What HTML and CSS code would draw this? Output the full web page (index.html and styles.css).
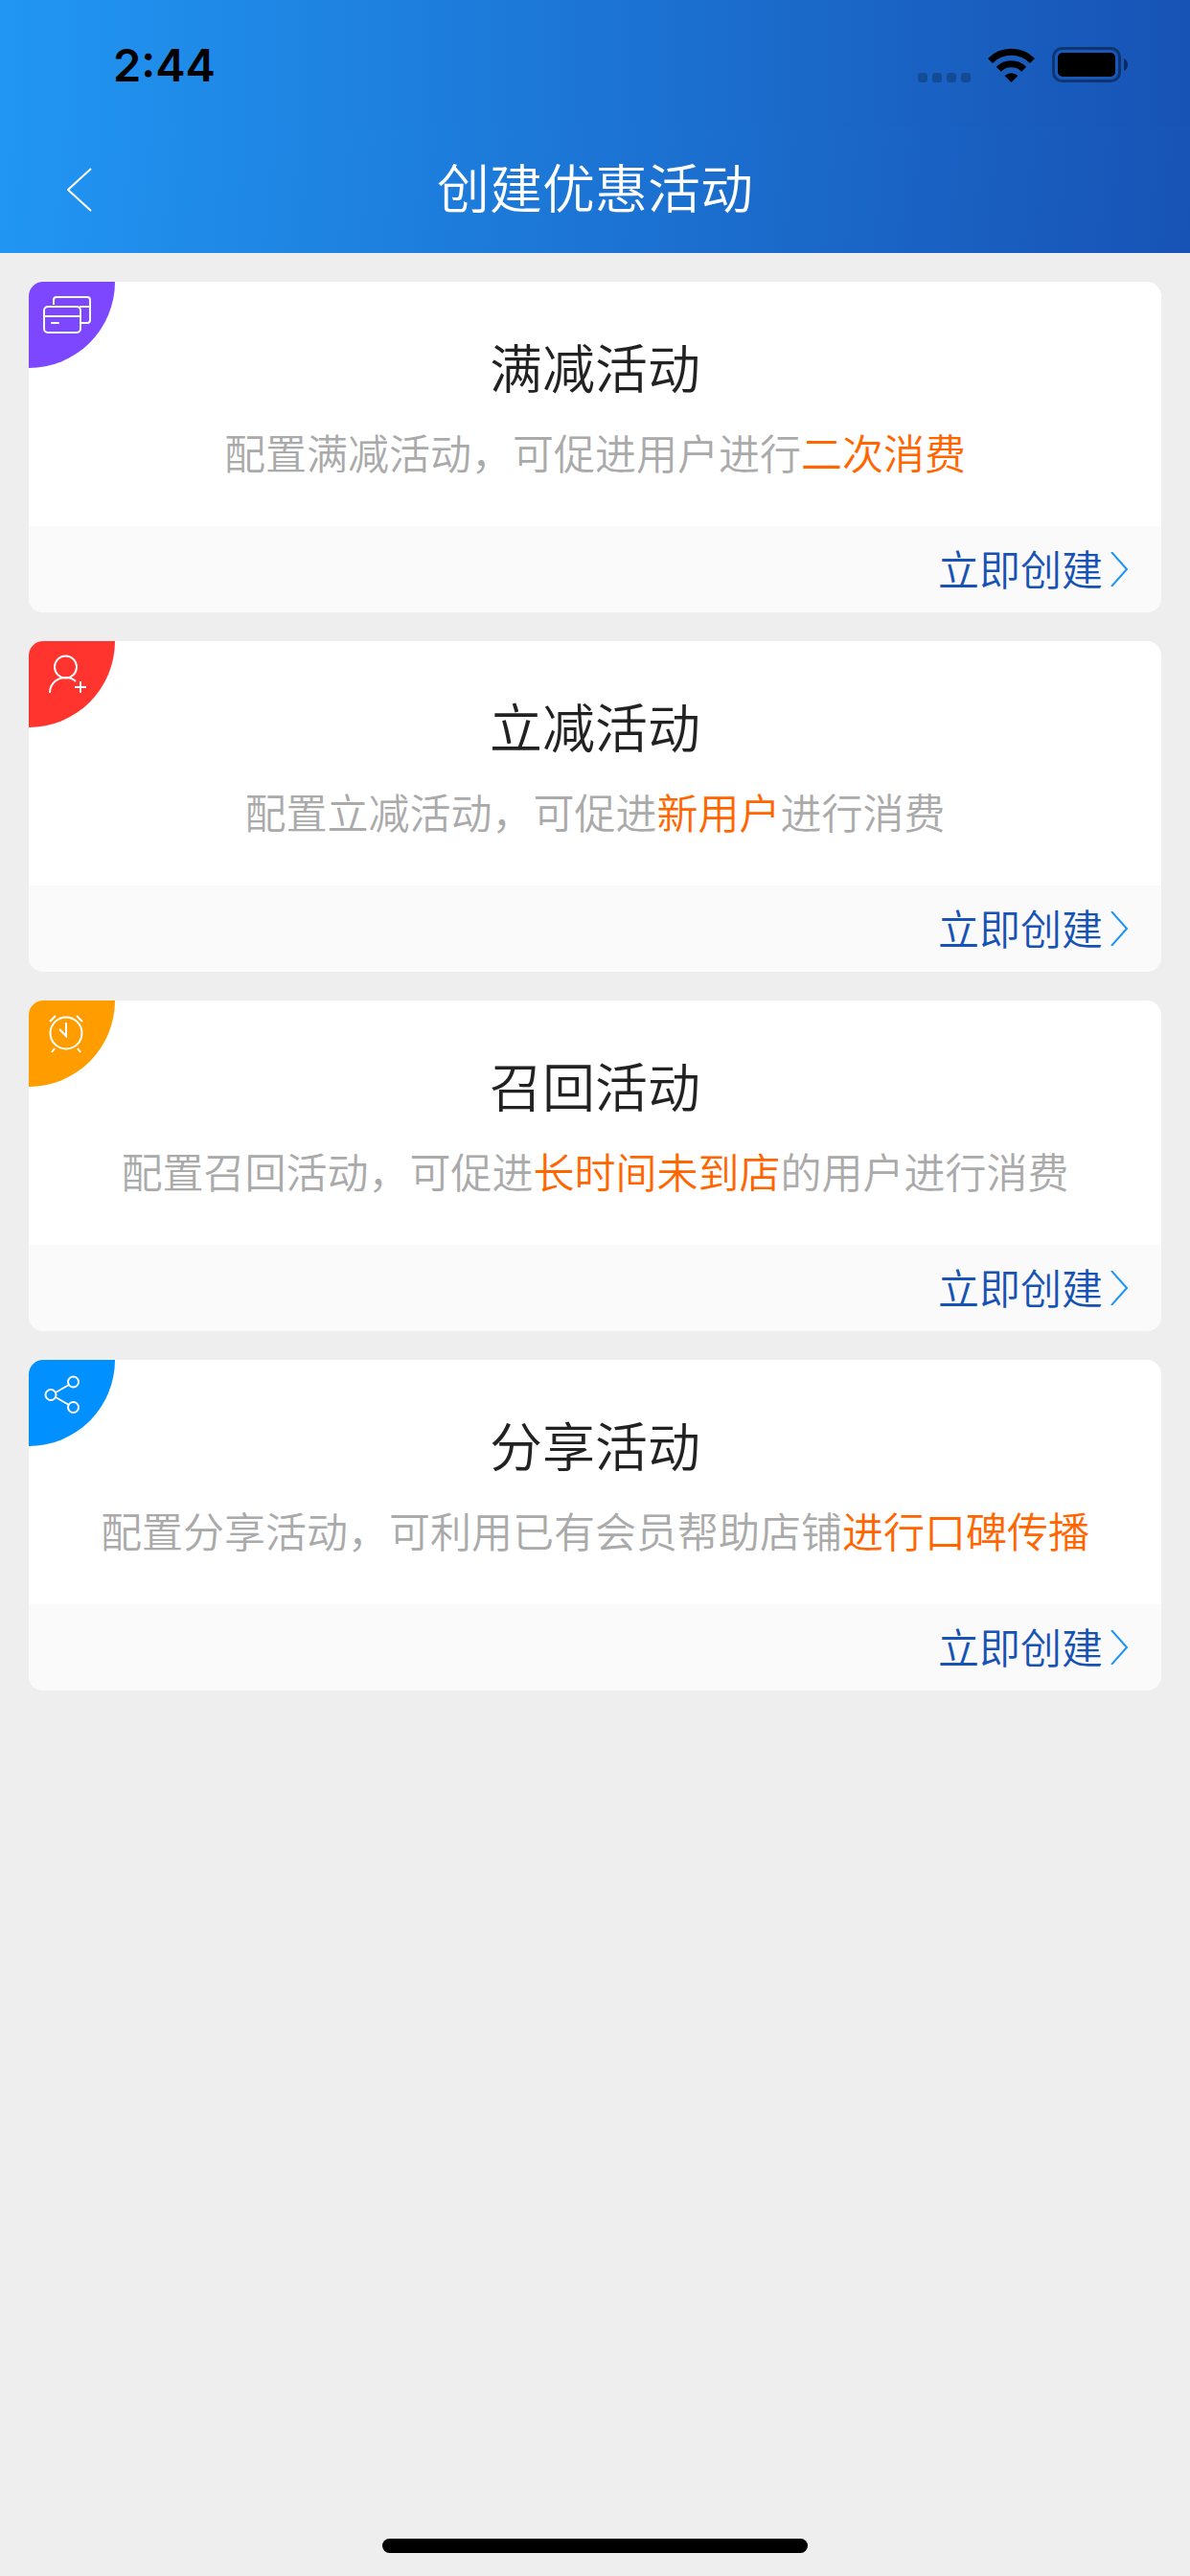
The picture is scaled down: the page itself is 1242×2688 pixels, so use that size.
FILE: index.html
```
<!DOCTYPE html>
<html lang="zh-CN">
<head>
    <meta charset="UTF-8">
    <meta name="viewport" content="width=device-width, initial-scale=1.0">
    <title>创建优惠活动</title>
    <link rel="stylesheet" href="styles.css">
</head>
<body>
    <!-- Status bar -->
    <div class="status-bar">
        <span class="time">2:44</span>
        <div class="status-icons">
            <svg class="signal" width="55" height="36" viewBox="0 0 55 36" aria-hidden="true">
                <rect x="0" y="26" width="10" height="10" rx="3"/>
                <rect x="15" y="26" width="10" height="10" rx="3"/>
                <rect x="30" y="26" width="10" height="10" rx="3"/>
                <rect x="45" y="26" width="10" height="10" rx="3"/>
            </svg>
            <svg class="wifi" width="49" height="36" viewBox="0 0 49 36" aria-hidden="true">
                <path d="M2.5 13.5 A31 31 0 0 1 46.5 13.5" fill="none" stroke="#000" stroke-width="7"/>
                <path d="M11.3 22.3 A18.7 18.7 0 0 1 37.7 22.3" fill="none" stroke="#000" stroke-width="7"/>
                <path d="M24.5 36 L17.6 29 A10 10 0 0 1 31.4 29 Z"/>
            </svg>
            <svg class="battery" width="80" height="37" viewBox="0 0 80 37" aria-hidden="true">
                <rect x="1.5" y="1.5" width="69" height="34" rx="9" fill="none" stroke="#000" stroke-width="3" opacity="0.4"/>
                <rect x="6" y="6" width="60" height="25" rx="5"/>
                <path d="M75 12 Q79 14 79 18.500 Q79 23 75 25 Z" opacity="0.5"/>
            </svg>
        </div>
    </div>

    <!-- Navigation -->
    <header class="nav-bar">
        <button class="back" type="button" aria-label="返回">
            <svg width="26" height="46" viewBox="0 0 26 46" aria-hidden="true">
                <path d="M25 1 L1 23 L25 45" fill="none" stroke="#fff" stroke-width="2"/>
            </svg>
        </button>
        <h1>创建优惠活动</h1>
    </header>

    <main class="activity-list">
        <section class="card">
            <div class="badge purple">
                <svg width="90" height="90" viewBox="0 0 90 90" aria-hidden="true">
                    <path d="M26 24 V19 Q26 16 29 16 H61 Q64 16 64 19 V40 Q64 43 61 43 H55 M53 26 H64"/>
                    <rect x="16" y="26" width="38" height="27" rx="4"/>
                    <path d="M16 36 H54 M24 43 H31" stroke-linecap="round"/>
                </svg>
            </div>
            <div class="card-body">
                <h2>满减活动</h2>
                <p>配置满减活动，可促进用户进行<em>二次消费</em></p>
            </div>
            <div class="card-footer">
                <a href="#">
                    <span>立即创建</span>
                    <svg width="18" height="36" viewBox="0 0 18 36" aria-hidden="true"><path d="M1 0 L17 18 L1 36"/></svg>
                </a>
            </div>
        </section>

        <section class="card">
            <div class="badge red">
                <svg width="90" height="90" viewBox="0 0 90 90" aria-hidden="true">
                    <circle cx="38.500" cy="27" r="11.500"/>
                    <path d="M22 54 C22 44 30 38 38.500 38 C43 38 46 39 49 42 M54 42 V54 M48 48 H60"/>
                </svg>
            </div>
            <div class="card-body">
                <h2>立减活动</h2>
                <p>配置立减活动，可促进<em>新用户</em>进行消费</p>
            </div>
            <div class="card-footer">
                <a href="#">
                    <span>立即创建</span>
                    <svg width="18" height="36" viewBox="0 0 18 36" aria-hidden="true"><path d="M1 0 L17 18 L1 36"/></svg>
                </a>
            </div>
        </section>

        <section class="card">
            <div class="badge orange">
                <svg width="90" height="90" viewBox="0 0 90 90" aria-hidden="true">
                    <circle cx="39" cy="34" r="16.500"/>
                    <path d="M39 23 V37 L32 30 M22 22 L28 16 M50 16 L56 22 M27 50 L24 54 M51 50 L54 54"/>
                </svg>
            </div>
            <div class="card-body">
                <h2>召回活动</h2>
                <p>配置召回活动，可促进<em>长时间未到店</em>的用户进行消费</p>
            </div>
            <div class="card-footer">
                <a href="#">
                    <span>立即创建</span>
                    <svg width="18" height="36" viewBox="0 0 18 36" aria-hidden="true"><path d="M1 0 L17 18 L1 36"/></svg>
                </a>
            </div>
        </section>

        <section class="card">
            <div class="badge blue">
                <svg width="90" height="90" viewBox="0 0 90 90" aria-hidden="true">
                    <circle cx="23" cy="36.500" r="5.500"/>
                    <circle cx="46.500" cy="23" r="5.500"/>
                    <circle cx="46.500" cy="49.500" r="5.500"/>
                    <path d="M28 34 L42 26 M28 39 L42 47"/>
                </svg>
            </div>
            <div class="card-body">
                <h2>分享活动</h2>
                <p>配置分享活动，可利用已有会员帮助店铺<em>进行口碑传播</em></p>
            </div>
            <div class="card-footer">
                <a href="#">
                    <span>立即创建</span>
                    <svg width="18" height="36" viewBox="0 0 18 36" aria-hidden="true"><path d="M1 0 L17 18 L1 36"/></svg>
                </a>
            </div>
        </section>
    </main>

    <div class="home-indicator"></div>
</body>
</html>
```
FILE: styles.css
```
* {
    box-sizing: border-box;
}

body {
    display: flex;
    flex-direction: column;
    min-height: 100vh;
    margin: 0;
    background: #eeeeee;
    font-family: "Noto Sans CJK SC", sans-serif;
    font-weight: 350;
}

h1,
h2,
p {
    margin: 0;
    font-weight: inherit;
}

/* Status bar */
.status-bar {
    display: flex;
    align-items: center;
    justify-content: space-between;
    height: 132px;
    padding: 3px 64px 0 118px;
    background: linear-gradient(90deg, #2196f3, #1753b5);
}

.time {
    font-family: Inter, sans-serif;
    font-size: 47px;
    font-weight: 600;
    color: #000;
}

.status-icons {
    display: flex;
    align-items: center;
    gap: 18px;
}

.signal {
    opacity: 0.22;
}

/* Navigation */
.nav-bar {
    display: grid;
    grid-template-columns: 132px 1fr 132px;
    align-items: center;
    height: 132px;
    background: linear-gradient(96deg, #2196f3, #1753b5);
    color: #fff;
}

.nav-bar h1 {
    padding-bottom: 10px;
    font-size: 55px;
    line-height: 90px;
    text-align: center;
}

.back {
    display: flex;
    align-items: center;
    height: 132px;
    padding: 0 0 0 70px;
    border: 0;
    background: none;
}

/* Cards */
.activity-list {
    display: flex;
    flex: 1;
    flex-direction: column;
    gap: 30px;
    padding: 30px;
}

.card {
    position: relative;
    overflow: hidden;
    border-radius: 15px;
    background: #fff;
}

.card-body {
    padding: 42px 30px 33px;
    text-align: center;
}

.card-body h2 {
    font-size: 55px;
    line-height: 90px;
    color: #222;
}

.card-body p {
    font-size: 43px;
    line-height: 90px;
    color: #aaa;
}

.card-body em {
    font-style: normal;
    color: #ff6600;
}

.card-footer {
    display: flex;
    justify-content: flex-end;
    padding: 0 35px;
    background: #fafafa;
}

.card-footer a {
    display: flex;
    align-items: center;
    gap: 8px;
    font-size: 43px;
    color: #1753b5;
    text-decoration: none;
}

.card-footer span {
    padding-bottom: 4px;
    line-height: 86px;
}

.card-footer path {
    fill: none;
    stroke: #2196f3;
    stroke-width: 2;
}

/* Corner badge */
.badge {
    position: absolute;
    top: 0;
    left: 0;
    width: 90px;
    height: 90px;
    border-bottom-right-radius: 90px;
}

.badge svg {
    display: block;
    fill: none;
    stroke: #fff;
    stroke-width: 2;
}

.purple {
    background: #7c47ff;
}

.red {
    background: #ff342f;
}

.orange {
    background: #ff9c00;
}

.blue {
    background: #0190ff;
}

.home-indicator {
    width: 444px;
    height: 15px;
    margin: 0 auto 24px;
    border-radius: 8px;
    background: #000;
}
```
